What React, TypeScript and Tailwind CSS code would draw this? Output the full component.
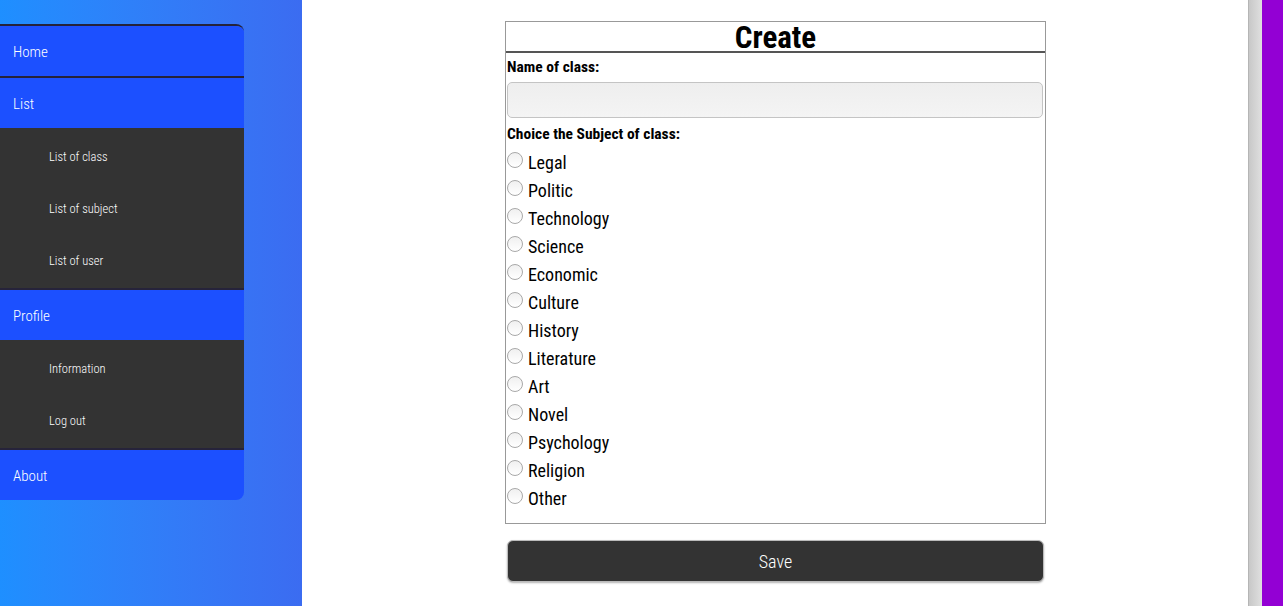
import React from "react";

const subjects = ["Legal","Politic","Technology","Science","Economic","Culture","History","Literature","Art","Novel","Psychology","Religion","Other"];

function NavTop({ label }: { label: string }) {
  return (
    <div className="h-[50px] bg-[#1c50ff] flex items-center pl-[13px] pt-[2px] text-white text-[15px] font-light">
      {label}
    </div>
  );
}
function NavSub({ label }: { label: string }) {
  return (
    <div className="h-[52px] flex items-center pl-[49px] pt-[2px] text-white text-[12.5px] font-light">{label}</div>
  );
}

export default function App() {
  return (
    <div className="w-[1283px] h-[606px] flex overflow-hidden font-['Roboto_Condensed','Liberation_Sans',sans-serif]">
      <div className="w-[302px] h-full bg-gradient-to-r from-[#1e8fff] to-[#3b6cf1] pt-[24px]">
        <div className="w-[244px] rounded-r-[8px] overflow-hidden border-t-2 border-[#26233a]">
          <NavTop label="Home" />
          <div className="border-t-2 border-[#26233a]">
            <NavTop label="List" />
          </div>
          <div className="bg-[#333333] py-[2px]">
            <NavSub label="List of class" />
            <NavSub label="List of subject" />
            <NavSub label="List of user" />
          </div>
          <div className="border-t-2 border-[#26233a]">
            <NavTop label="Profile" />
          </div>
          <div className="bg-[#333333] py-[2px]">
            <NavSub label="Information" />
            <NavSub label="Log out" />
          </div>
          <div className="border-t-2 border-[#26233a]">
            <NavTop label="About" />
          </div>
        </div>
      </div>
      <div className="w-[946px] h-full bg-white pt-[21px] pl-[203px]">
        <div className="w-[541px] border border-[#999999] pb-[11px]">
          <div className="h-[31px] border-b-2 border-[#555555] flex items-center justify-center text-[31px] font-bold text-black leading-none pt-[2px]">Create</div>
          <div className="text-[15.5px] font-bold text-black pl-[1px] pt-[6px] leading-[16px]">Name of class:</div>
          <div className="px-[1px] pt-[7px]">
            <div className="h-[36px] w-[536px] rounded-[5px] border border-[#c4c4c4] bg-gradient-to-b from-[#eeeeee] to-[#f4f4f4]" />
          </div>
          <div className="text-[15.5px] font-bold text-black pl-[1px] pt-[8px] leading-[16px]">Choice the Subject of class:</div>
          <div className="pt-[6px]">
            {subjects.map((s) => (
              <div key={s} className="h-[28px] flex items-center pl-[1px]">
                <span className="w-[16px] h-[16px] rounded-full border border-[#a8a8a8] bg-gradient-to-b from-[#f0f0f0] to-white -mt-[5px]" />
                <span className="ml-[5px] text-[18px] text-black font-normal">{s}</span>
              </div>
            ))}
          </div>
        </div>
        <div className="w-[537px] ml-[2px] mt-[16px] h-[42px] rounded-[6px] bg-[#333333] border border-[#bbbbbb] shadow-[0_1px_2px_rgba(0,0,0,0.3)] flex items-center justify-center text-white text-[18px] font-light">
          Save
        </div>
      </div>
      <div className="w-[14px] h-full bg-gradient-to-r from-[#c8c8c8] to-[#e0e0e0] border-l border-[#b5b5b5]" />
      <div className="w-[21px] h-full bg-[#9300d4]" />
    </div>
  );
}
